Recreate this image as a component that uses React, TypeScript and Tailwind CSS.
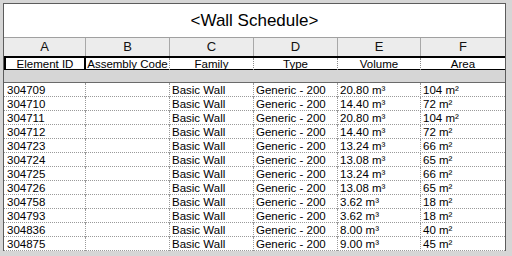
import React from "react"

const rows = [
  ["304709", "20.80", "104"],
  ["304710", "14.40", "72"],
  ["304711", "20.80", "104"],
  ["304712", "14.40", "72"],
  ["304723", "13.24", "66"],
  ["304724", "13.08", "65"],
  ["304725", "13.24", "66"],
  ["304726", "13.08", "65"],
  ["304758", "3.62", "18"],
  ["304793", "3.62", "18"],
  ["304836", "8.00", "40"],
  ["304875", "9.00", "45"],
]

const cols = "grid grid-cols-[82px_84px_84px_84px_83px_84px]"
const letters = ["A", "B", "C", "D", "E", "F"]
const names = ["Assembly Code", "Family", "Type", "Volume", "Area"]

export default function App() {
  return (
    <div className="h-[256px] w-[512px] overflow-hidden bg-[#d6d6d6] pl-[3px] pt-[3px] font-['Liberation_Sans',Arial,sans-serif] text-black">
      <div className="w-[503px] border-x border-t border-[#5c5c5c] bg-white">
        {/* title */}
        <div className="flex h-[34px] items-center justify-center border-b border-[#a0a0a0] text-[17px] leading-none">
          &lt;Wall Schedule&gt;
        </div>

        {/* column letters */}
        <div className={`${cols} h-[18px] bg-[#ececec] text-[13px] leading-[18px] text-[#111]`}>
          {letters.map((l, i) => (
            <div
              key={l}
              className={`text-center ${i < 5 ? "border-r border-[#a8a8a8]" : ""}`}
            >
              {l}
            </div>
          ))}
        </div>

        {/* field names */}
        <div className={`${cols} h-[14px] border-b border-t-2 border-black text-[11.5px] leading-[12px]`}>
          <div className="border-x-2 border-black text-center">Element ID</div>
          {names.map((n, i) => (
            <div
              key={n}
              className={`overflow-hidden whitespace-nowrap text-center ${
                i < 4 ? "border-r border-dotted border-[#8a8a8a]" : ""
              }`}
            >
              {n}
            </div>
          ))}
        </div>

        <div className="h-[12px] bg-[#d6d6d6]" />

        {/* data */}
        <div className="border-t border-[#6a6a6a]">
          {rows.map(([id, vol, area]) => (
            <div
              key={id}
              className={`${cols} h-[14px] border-b border-dotted border-[#9a9a9a] text-[11.5px] leading-[14px]`}
            >
              <div className="border-r border-dotted border-[#9a9a9a] pl-[3px]">{id}</div>
              <div className="border-r border-dotted border-[#9a9a9a]" />
              <div className="border-r border-dotted border-[#9a9a9a] pl-[2px]">Basic Wall</div>
              <div className="border-r border-dotted border-[#9a9a9a] pl-[2px]">Generic - 200</div>
              <div className="border-r border-dotted border-[#9a9a9a] pl-[2px]">{vol} m³</div>
              <div className="pl-[2px]">{area} m²</div>
            </div>
          ))}
        </div>
      </div>
    </div>
  )
}
